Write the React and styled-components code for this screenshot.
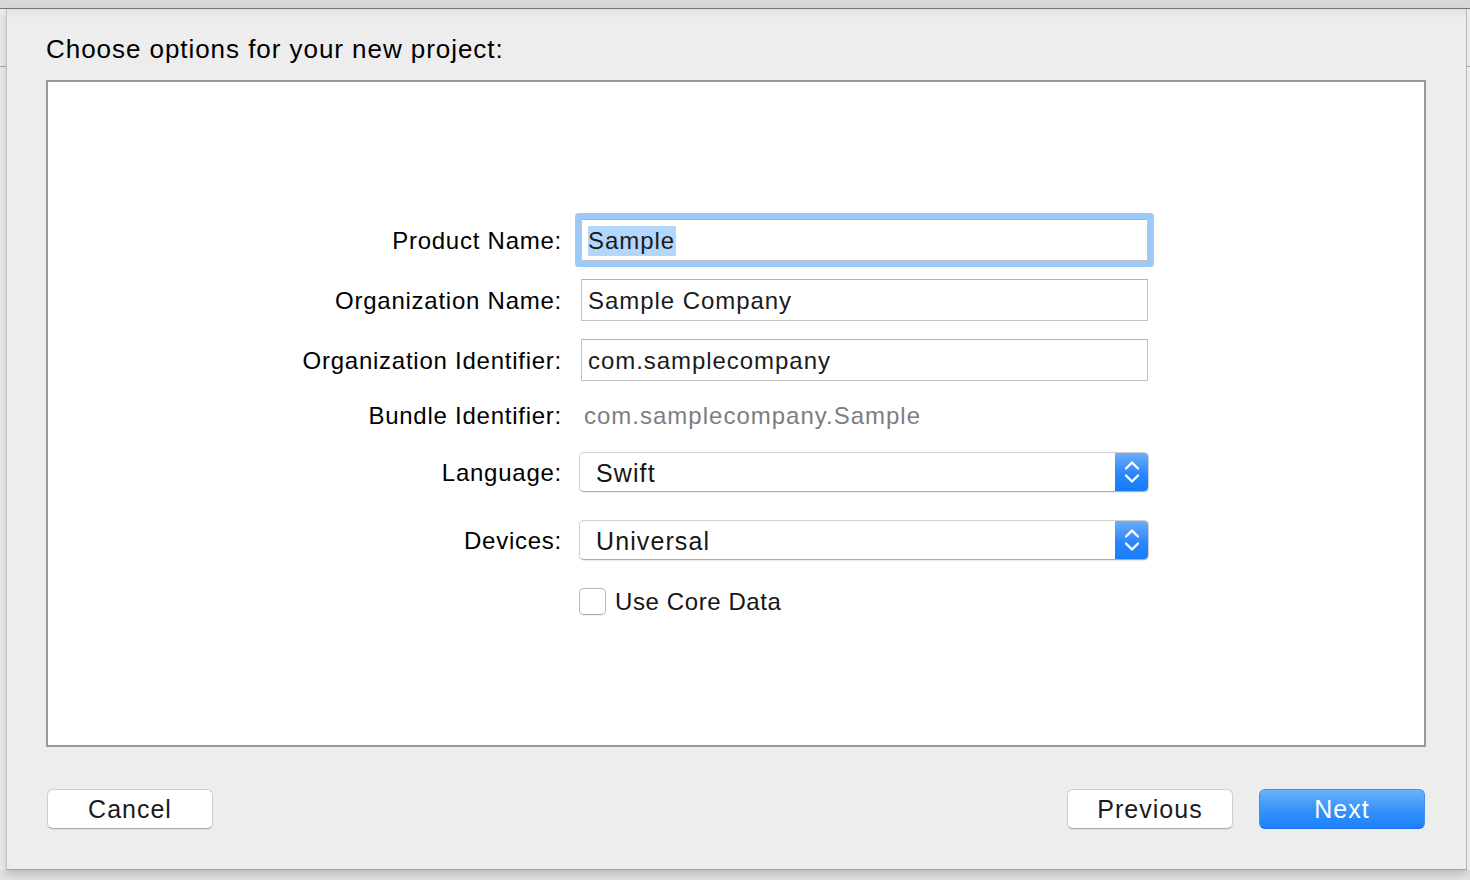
import React from 'react';
import styled, { createGlobalStyle } from 'styled-components';

const font = '"Liberation Sans", Arial, sans-serif';

const GlobalStyle = createGlobalStyle`
  html, body {
    margin: 0;
    padding: 0;
    width: 1470px;
    height: 880px;
    overflow: hidden;
    background: #dcdcdc;
    font-family: ${font};
  }
`;

const Screen = styled.div`
  width: 1470px;
  height: 880px;
  display: flex;
  flex-direction: column;
`;

const TitleStrip = styled.div`
  height: 8px;
  background: #d9d9d9;
  border-bottom: 1px solid #777;
`;

const Body = styled.div`
  display: flex;
  flex-direction: row;
  align-items: flex-start;
  flex: 1;
  background: linear-gradient(#e9e9e9, #d2d2d2 50%, #e2e2e2);
`;

const WindowEdge = styled.div`
  width: ${({ w }) => w}px;
  height: 861px;
  background: linear-gradient(
    to bottom,
    #ececec 0,
    #ececec 57px,
    #a8a8a8 57px,
    #a8a8a8 58px,
    #ececec 58px
  );
`;

const Sheet = styled.div`
  flex: 1;
  height: 861px;
  box-sizing: border-box;
  background: linear-gradient(#e2e2e2 0, #ededed 9px, #ededed 100%);
  border-left: 1px solid #c2c2c2;
  border-right: 1px solid #b6b6b6;
  border-bottom: 1px solid #a3a3a3;
  box-shadow: 0 4px 9px rgba(0, 0, 0, 0.18);
  padding: 26px 40px 0 39px;
  display: flex;
  flex-direction: column;
`;

const Heading = styled.h1`
  margin: 0;
  font-family: ${font};
  font-weight: normal;
  font-size: 26px;
  line-height: 29px;
  letter-spacing: 0.95px;
  color: #000;
`;

const Panel = styled.div`
  margin-top: 16px;
  height: 667px;
  box-sizing: border-box;
  background: #fff;
  border: 2px solid #989898;
  padding-top: 137px;
`;

const Row = styled.div`
  display: flex;
  flex-direction: row;
  align-items: center;
  height: ${({ h }) => h}px;
  margin-top: ${({ top }) => top || 0}px;
`;

const Label = styled.div`
  width: 514px;
  padding-top: 2px;
  text-align: right;
  font-size: 24px;
  letter-spacing: 0.75px;
  color: #000;
  margin-right: 17px;
  white-space: nowrap;
`;

const TextField = styled.div`
  margin-left: 2px;
  width: 567px;
  height: 42px;
  box-sizing: border-box;
  border: 1px solid #c3c3c3;
  border-top-color: #b4b4b4;
  background: #fff;
  border-radius: ${({ focused }) => (focused ? '1px' : '0')};
  box-shadow: ${({ focused }) => (focused ? '0 0 0 6px #9dc9f9' : 'none')};
  padding: 2px 0 0 6px;
  display: flex;
  align-items: center;
  font-size: 24px;
  letter-spacing: 0.95px;
  color: #1b1b1b;
`;

const Selected = styled.span`
  background: #b3d6fd;
  line-height: 30px;
  padding-right: 1px;
`;

const Plain = styled.div`
  padding: 2px 0 0 5px;
  font-size: 24px;
  letter-spacing: 1px;
  color: #7e7e7e;
`;

const Popup = styled.div`
  width: 570px;
  height: 40px;
  box-sizing: border-box;
  display: flex;
  flex-direction: row;
  align-items: stretch;
  background: #fff;
  border: 1px solid #d0d0d0;
  border-bottom-color: #adadad;
  border-radius: 5px;
  box-shadow: 0 1px 1px rgba(0, 0, 0, 0.08);
  overflow: hidden;
`;

const PopupText = styled.div`
  flex: 1;
  display: flex;
  align-items: center;
  padding: 2px 0 0 16px;
  font-size: 25px;
  letter-spacing: 1.1px;
  color: #161616;
`;

const Stepper = styled.div`
  width: 33px;
  display: flex;
  align-items: center;
  justify-content: center;
  background: linear-gradient(#6caefa, #2b86fb 55%, #167cfb);
`;

const CheckBox = styled.div`
  width: 27px;
  height: 27px;
  box-sizing: border-box;
  border: 1px solid #b8b8b8;
  border-bottom-color: #a9a9a9;
  border-radius: 5px;
  background: #fff;
  box-shadow: 0 1px 1px rgba(0, 0, 0, 0.06);
  margin-right: 9px;
`;

const CheckLabel = styled.div`
  font-size: 24px;
  letter-spacing: 0.6px;
  color: #161616;
`;

const Footer = styled.div`
  display: flex;
  flex-direction: row;
  align-items: center;
  margin-top: 42px;
  padding: 0 1px;
`;

const Spacer = styled.div`
  flex: 1;
`;

const Button = styled.button`
  width: 166px;
  height: 40px;
  box-sizing: border-box;
  margin-left: ${({ gap }) => gap || 0}px;
  border-radius: 6px;
  font-family: ${font};
  font-size: 25px;
  letter-spacing: 1px;
  padding: 0;
  cursor: default;
  ${({ primary }) =>
    primary
      ? `
      color: #fff;
      border: 1px solid #3e90f6;
      border-bottom-color: #1b6fe8;
      background: linear-gradient(#6cb2fa, #3894fb 50%, #1b80fb);
    `
      : `
      color: #1b1b1b;
      border: 1px solid #cfcfcf;
      border-bottom-color: #acacac;
      background: #fff;
      box-shadow: 0 1px 1px rgba(0, 0, 0, 0.06);
    `}
`;

const Chevrons = () => (
  <svg width="20" height="28" viewBox="0 0 20 28">
    <path d="M4 10.5 L10 4.5 L16 10.5" fill="none" stroke="#fff" strokeWidth="2.3" strokeLinecap="round" strokeLinejoin="round" />
    <path d="M4 17.5 L10 23.5 L16 17.5" fill="none" stroke="#fff" strokeWidth="2.3" strokeLinecap="round" strokeLinejoin="round" />
  </svg>
);

const PopupButton = ({ value }) => (
  <Popup>
    <PopupText>{value}</PopupText>
    <Stepper>
      <Chevrons />
    </Stepper>
  </Popup>
);

const App = () => (
  <>
    <GlobalStyle />
    <Screen>
      <TitleStrip />
      <Body>
        <WindowEdge w={6} />
        <Sheet>
          <Heading>Choose options for your new project:</Heading>
          <Panel>
            <Row h={42}>
              <Label>Product Name:</Label>
              <TextField focused>
                <Selected>Sample</Selected>
              </TextField>
            </Row>
            <Row h={42} top={18}>
              <Label>Organization Name:</Label>
              <TextField>Sample Company</TextField>
            </Row>
            <Row h={42} top={18}>
              <Label>Organization Identifier:</Label>
              <TextField>com.samplecompany</TextField>
            </Row>
            <Row h={38} top={15}>
              <Label>Bundle Identifier:</Label>
              <Plain>com.samplecompany.Sample</Plain>
            </Row>
            <Row h={40} top={18}>
              <Label>Language:</Label>
              <PopupButton value="Swift" />
            </Row>
            <Row h={40} top={28}>
              <Label>Devices:</Label>
              <PopupButton value="Universal" />
            </Row>
            <Row h={27} top={28}>
              <Label />
              <CheckBox />
              <CheckLabel>Use Core Data</CheckLabel>
            </Row>
          </Panel>
          <Footer>
            <Button>Cancel</Button>
            <Spacer />
            <Button>Previous</Button>
            <Button primary gap={26}>Next</Button>
          </Footer>
        </Sheet>
        <WindowEdge w={3} />
      </Body>
    </Screen>
  </>
);

export default App;
